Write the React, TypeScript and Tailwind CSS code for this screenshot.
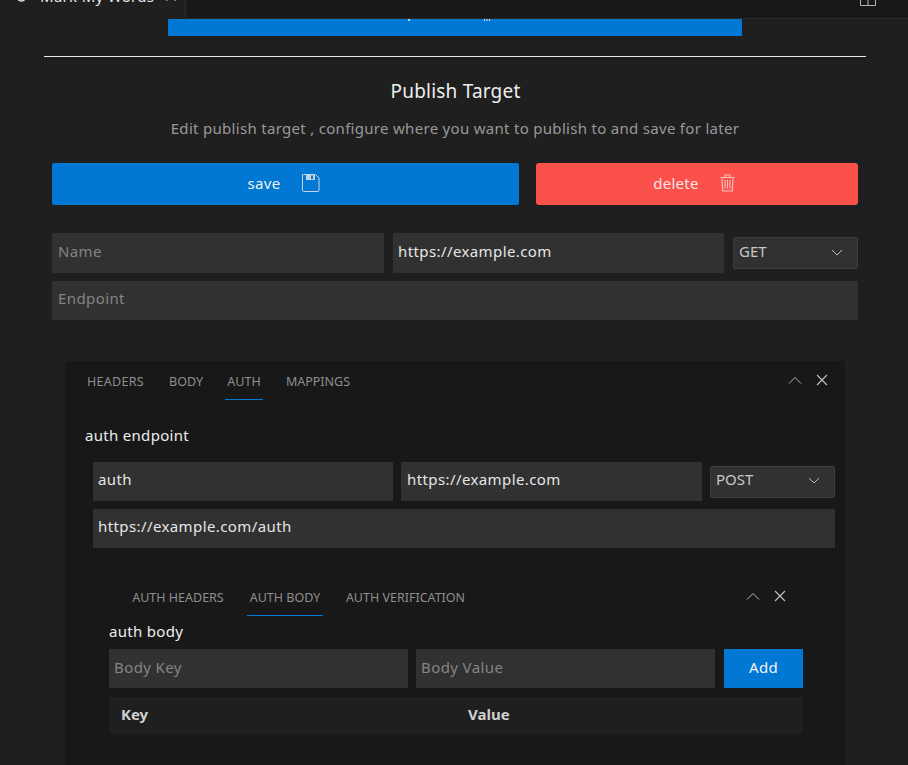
import type { ReactNode } from 'react';

const font = { fontFamily: '"Noto Sans", "Open Sans", sans-serif' };

function ChevronDown({ className }: { className?: string }) {
  return (
    <svg width="12" height="7" viewBox="0 0 12 7" fill="none" stroke="#bbbbbb" strokeWidth="1" className={className}>
      <path d="M1 1l5 5 5-5" />
    </svg>
  );
}

function PanelControls() {
  return (
    <div className="mb-[1px] flex items-center gap-[14px]">
      <svg width="14" height="8" viewBox="0 0 14 8" fill="none" stroke="#b5b5b5" strokeWidth="1">
        <path d="M1 7.5l6-6 6 6" />
      </svg>
      <svg width="12" height="12" viewBox="0 0 12 12" fill="none" stroke="#c4c4c4" strokeWidth="1.1">
        <path d="M1 1l10 10M11 1L1 11" />
      </svg>
    </div>
  );
}

function Field({ value, placeholder, className }: { value?: string; placeholder?: string; className: string }) {
  return (
    <div className={`flex items-center bg-[#313131] text-[15px] tracking-[0.4px] ${value ? 'text-[#e6e6e6]' : 'text-[#848484]'} ${className}`}>
      {value ?? placeholder}
    </div>
  );
}

function MethodSelect({ label, className }: { label: string; className: string }) {
  return (
    <div className={`flex h-[32px] items-center justify-between rounded-[2px] border border-[#3c3c3c] bg-[#313131] pl-[5px] pr-[14px] text-[15px] text-[#c8c8c8] ${className}`}>
      <span>{label}</span>
      <ChevronDown className="mt-[2px]" />
    </div>
  );
}

function Tab({ children, active, className }: { children: ReactNode; active?: boolean; className: string }) {
  return (
    <div className={`flex h-full items-center justify-center border-b-[1px] pt-[4px] text-[12.5px] text-[#8f8f8f] ${active ? 'border-[#0078d4]' : 'border-transparent'} ${className}`}>
      {children}
    </div>
  );
}

export default function App() {
  return (
    <div className="h-[765px] w-[908px] overflow-hidden bg-[#1f1f1f]" style={font}>
      <div className="flex h-[19px]">
        <div className="flex h-[19px] w-[186px] shrink-0 items-end overflow-hidden border-r border-[#2b2b2b]">
          <div className="mb-[13px] flex shrink-0 items-center pl-[15px] text-[15px] leading-[20px] tracking-[0.3px] text-[#e6e6e6]">
            <svg width="14" height="14" viewBox="0 0 14 14" fill="none" stroke="#e6e6e6" strokeWidth="1.6" className="mr-[11px]">
              <path d="M10 1v7c0 3-2 4-3.5 4S4 11.4 3 10.5" />
            </svg>
            <span>Mark My Words</span>
            <svg width="10" height="10" viewBox="0 0 10 10" fill="none" stroke="#e6e6e6" strokeWidth="1.1" className="ml-[12px]">
              <path d="M0.5 0.5l9 9M9.5 0.5l-9 9" />
            </svg>
          </div>
        </div>
        <div className="flex h-[19px] flex-1 items-end justify-end overflow-hidden border-b border-[#2b2b2b] bg-[#181818] pb-[12px] pr-[32px]">
          <svg width="16" height="16" viewBox="0 0 16 16" fill="none" stroke="#b5b5b5" strokeWidth="1" className="shrink-0">
            <path d="M0.5 0.5h15v15h-15zM0.5 8.5h15M8 8.5v7" />
          </svg>
        </div>
      </div>

      <div className="ml-[168px] flex h-[17px] w-[574px] items-start justify-center overflow-hidden bg-[#0078d4] pr-[31px] text-[15px] text-white">
        <div className="-mt-[18px] flex items-end gap-[11px] leading-[20px]">
          <span>Import data</span>
          <svg width="8" height="18" viewBox="0 0 8 18" fill="none" stroke="#d5d5d5" strokeWidth="1.2" className="shrink-0">
            <path d="M1.5 0v18M4 0v18M6.5 0v18" />
          </svg>
        </div>
      </div>

      <div className="ml-[44px] mt-[20px] h-px w-[822px] bg-[#e8e8e8]" />

      <h1 className="mt-[20px] pl-[3px] text-center text-[19px] leading-[28px] tracking-[0.2px] text-[#eeeeee]">Publish Target</h1>
      <p className="mt-[13px] pl-[2px] text-center text-[15px] leading-[20px] tracking-[0.3px] text-[#999999]">
        Edit publish target , configure where you want to publish to and save for later
      </p>

      <div className="ml-[52px] mt-[25px] flex w-[806px] gap-[17px]">
        <button className="flex h-[42px] w-[467px] items-center justify-center gap-[22px] rounded-[2px] bg-[#0078d4] pb-[2px] pr-[3px] text-[15px] tracking-[0.3px] text-[#f2f2f2]">
          <span>save</span>
          <svg width="18" height="18" viewBox="0 0 18 18" fill="none">
            <path d="M1.5 0.5h12l3.5 3.5v12.5a1 1 0 0 1-1 1H1.5a1 1 0 0 1-1-1v-15.5a1 1 0 0 1 1-1z" stroke="#c3d3e2" />
            <rect x="4" y="1" width="9" height="5" fill="#c3d3e2" />
            <rect x="9" y="1.5" width="2" height="3.5" fill="#0078d4" />
          </svg>
        </button>
        <button className="flex h-[42px] w-[322px] items-center justify-center gap-[21px] rounded-[3px] bg-[#fc514b] pb-[2px] pr-[6px] text-[15px] tracking-[0.3px] text-[#f8e6e4]">
          <span>delete</span>
          <svg width="15" height="18" viewBox="0 0 15 18" fill="none" stroke="#f3c4c1" strokeWidth="1.1">
            <path d="M0.5 3.5h14M5 3.5V1h5v2.5M2 3.5l0.6 13.5h9.8L13 3.5M5 6v8.5M7.5 6v8.5M10 6v8.5" />
          </svg>
        </button>
      </div>

      <div className="ml-[52px] mt-[28px] flex w-[806px] items-center gap-[9px]">
        <Field placeholder="Name" className="h-[40px] w-[332px] pb-[4px] pl-[6px]" />
        <Field value="https://example.com" className="h-[40px] w-[331px] pb-[4px] pl-[5px]" />
        <MethodSelect label="GET" className="w-[125px] pb-[3px]" />
      </div>
      <Field placeholder="Endpoint" className="ml-[52px] mt-[8px] h-[39px] w-[806px] pb-[4px] pl-[6px]" />

      <section className="ml-[65px] mt-[41px] h-[404px] w-[780px] bg-[#181818]">
        <div className="flex h-[39px] items-center justify-between pr-[17px]">
          <div className="flex h-full items-center pl-[19px]">
            <Tab className="w-[63px] tracking-[0.3px]">HEADERS</Tab>
            <Tab className="ml-[19px] w-[40px]">BODY</Tab>
            <Tab active className="ml-[19px] w-[38px]">AUTH</Tab>
            <Tab className="ml-[20px] w-[70px]">MAPPINGS</Tab>
          </div>
          <PanelControls />
        </div>
        <div className="ml-[20px] mt-[25px] text-[15px] leading-[20px] tracking-[0.3px] text-[#eeeeee]">auth endpoint</div>

        <div className="ml-[28px] mt-[17px] flex w-[742px] items-center gap-[8px]">
          <Field value="auth" className="h-[39px] w-[300px] pb-[4px] pl-[5px]" />
          <Field value="https://example.com" className="h-[39px] w-[301px] pb-[4px] pl-[6px]" />
          <MethodSelect label="POST" className="w-[125px] pb-[5px]" />
        </div>
        <Field value="https://example.com/auth" className="ml-[28px] mt-[8px] h-[39px] w-[742px] pb-[4px] pl-[5px]" />

        <div className="mt-[29px] flex h-[39px] items-center justify-between pr-[59px]">
          <div className="ml-[63px] flex h-full items-center">
            <Tab className="w-[100px]">AUTH HEADERS</Tab>
            <Tab active className="ml-[19px] w-[76px]">AUTH BODY</Tab>
            <Tab className="ml-[20px] w-[125px]">AUTH VERIFICATION</Tab>
          </div>
          <PanelControls />
        </div>

        <div className="ml-[44px] mt-[5px] text-[15px] leading-[20px] tracking-[0.3px] text-[#eeeeee]">auth body</div>
        <div className="ml-[44px] mt-[8px] flex w-[694px] gap-[8px]">
          <Field placeholder="Body Key" className="h-[39px] w-[299px] pb-[2px] pl-[5px]" />
          <Field placeholder="Body Value" className="h-[39px] w-[299px] pb-[2px] pl-[5px]" />
          <button className="ml-[1px] h-[39px] w-[79px] bg-[#0078d4] pb-[2px] text-[15px] tracking-[0.3px] text-[#f2f2f2]">Add</button>
        </div>
        <div className="ml-[44px] mt-[9px] flex h-[37px] w-[694px] items-center bg-[#1f1f1f] pb-[2px] text-[15px] font-bold text-[#d0d0d0]">
          <div className="w-[359px] pl-[12px]">Key</div>
          <div>Value</div>
        </div>
      </section>
    </div>
  );
}
